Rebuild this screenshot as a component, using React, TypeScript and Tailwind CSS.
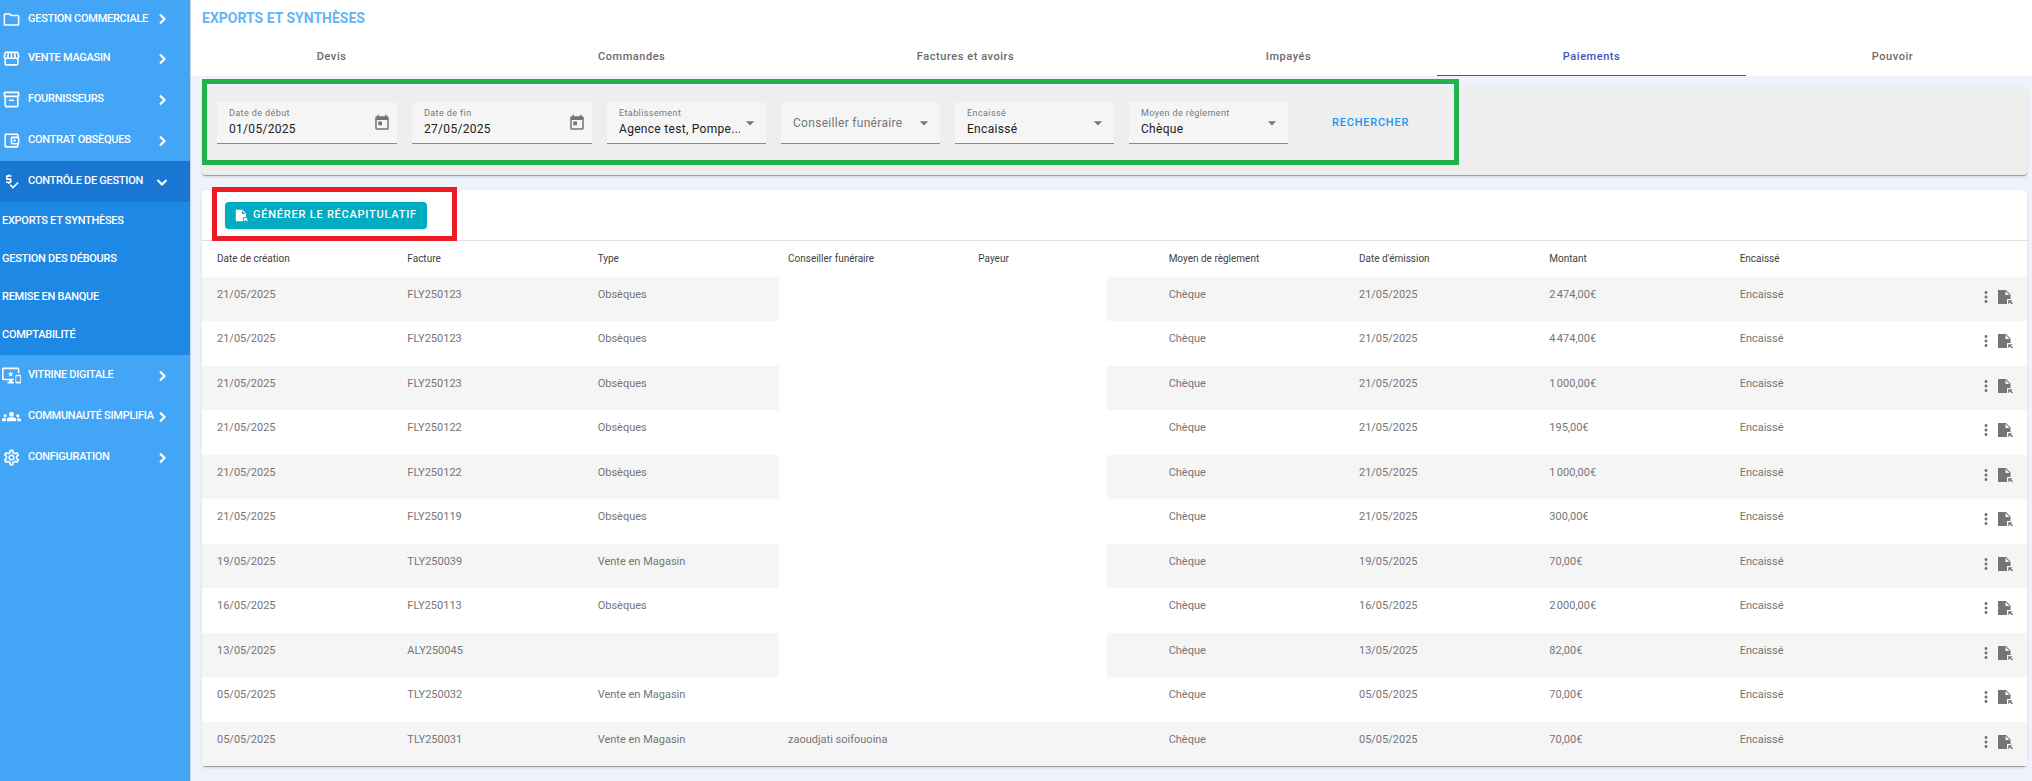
import { useState } from 'react'
import type { ReactNode } from 'react'
import type { IconType } from 'react-icons'
import {
  MdArrowDropDown, MdGroups, MdImportantDevices, MdMoreVert, MdOutlineAccountBalanceWallet,
  MdOutlineFolder, MdOutlineInventory2, MdOutlineSettings, MdOutlineStorefront, MdPriceCheck, MdToday,
} from 'react-icons/md'

interface MenuItem {
  label: string
  icon: IconType
  children?: string[]
}

interface Payment {
  created: string
  invoice: string
  type: string
  advisor?: string
  amount: string
}

const MENU: MenuItem[] = [
  { label: 'GESTION COMMERCIALE', icon: MdOutlineFolder },
  { label: 'VENTE MAGASIN', icon: MdOutlineStorefront },
  { label: 'FOURNISSEURS', icon: MdOutlineInventory2 },
  { label: 'CONTRAT OBSÈQUES', icon: MdOutlineAccountBalanceWallet },
  {
    label: 'CONTRÔLE DE GESTION',
    icon: MdPriceCheck,
    children: ['EXPORTS ET SYNTHÈSES', 'GESTION DES DÉBOURS', 'REMISE EN BANQUE', 'COMPTABILITÉ'],
  },
  { label: 'VITRINE DIGITALE', icon: MdImportantDevices },
  { label: 'COMMUNAUTÉ SIMPLIFIA', icon: MdGroups },
  { label: 'CONFIGURATION', icon: MdOutlineSettings },
]

const TABS = ['Devis', 'Commandes', 'Factures et avoirs', 'Impayés', 'Paiements', 'Pouvoir']

const COLUMNS = [
  'Date de création', 'Facture', 'Type', 'Conseiller funéraire', 'Payeur',
  'Moyen de règlement', "Date d'émission", 'Montant', 'Encaissé',
]

// \u202f: narrow space between thousands, as Intl writes it in French
const PAYMENTS: Payment[] = [
  { created: '21/05/2025', invoice: 'FLY250123', type: 'Obsèques', amount: '2\u202f474,00€' },
  { created: '21/05/2025', invoice: 'FLY250123', type: 'Obsèques', amount: '4\u202f474,00€' },
  { created: '21/05/2025', invoice: 'FLY250123', type: 'Obsèques', amount: '1\u202f000,00€' },
  { created: '21/05/2025', invoice: 'FLY250122', type: 'Obsèques', amount: '195,00€' },
  { created: '21/05/2025', invoice: 'FLY250122', type: 'Obsèques', amount: '1\u202f000,00€' },
  { created: '21/05/2025', invoice: 'FLY250119', type: 'Obsèques', amount: '300,00€' },
  { created: '19/05/2025', invoice: 'TLY250039', type: 'Vente en Magasin', amount: '70,00€' },
  { created: '16/05/2025', invoice: 'FLY250113', type: 'Obsèques', amount: '2\u202f000,00€' },
  { created: '13/05/2025', invoice: 'ALY250045', type: '', amount: '82,00€' },
  { created: '05/05/2025', invoice: 'TLY250032', type: 'Vente en Magasin', amount: '70,00€' },
  { created: '05/05/2025', invoice: 'TLY250031', type: 'Vente en Magasin', advisor: 'zaoudjati soifouoina', amount: '70,00€' },
]

function Chevron({ open }: { open: boolean }) {
  return (
    <svg viewBox="0 0 12 12" className="size-3 shrink-0" fill="none" stroke="currentColor" strokeWidth="2.2">
      <path d={open ? 'M1.5 4L6 8.5 10.5 4' : 'M4 1.5L8.5 6 4 10.5'} />
    </svg>
  )
}

function FileExportIcon({ className }: { className: string }) {
  return (
    <svg viewBox="0 0 16 16" className={className} fill="currentColor">
      <path fillRule="evenodd" d="M1 1h8l4.500 4.500V10H10v5H1zM8.500 2v4h4z" />
      <path d="M11.200 11.200H15.500L14.200 12.500l1.800 2L15 15.500l-1.900-1.900-1.900 1.700z" />
    </svg>
  )
}

function Sidebar() {
  const [opened, setOpened] = useState('CONTRÔLE DE GESTION')

  return (
    <nav className="w-[191px] shrink-0 border-r border-[#ccd3e2] bg-[#42a5f5] text-[11px] font-medium tracking-tight text-white">
      {MENU.map(({ label, icon: Icon, children }, i) => {
        const open = opened === label
        return (
          <div key={label}>
            <button
              onClick={() => setOpened(open ? '' : label)}
              className={`flex w-full items-center pr-[22px] pl-[2px] whitespace-nowrap ${i === 0 ? 'h-[38px]' : 'h-[41px]'} ${open ? 'bg-[#1976d2]' : ''}`}
            >
              <Icon className="mr-[7px] size-[19px] shrink-0" />
              <span className="flex-1 text-left">{label}</span>
              <Chevron open={open} />
            </button>
            {open && children && (
              <div className="bg-[#1e88e5] pb-px">
                {children.map(child => (
                  <a key={child} href="#" className="flex h-[38px] items-center pl-[2px]">{child}</a>
                ))}
              </div>
            )}
          </div>
        )
      })}
    </nav>
  )
}

function Field({ id, label, icon, className, children }: {
  id: string
  label: string
  icon: ReactNode
  className: string
  children: ReactNode
}) {
  return (
    <div className={`flex h-[42px] items-center rounded-t border-b border-[#8c8c8c] bg-[#f5f5f5] pl-3 tracking-wide text-[#757575] ${className}`}>
      <div className="min-w-0 flex-1">
        <label htmlFor={id} className="block text-[9px] leading-3">{label}</label>
        {children}
      </div>
      {icon}
    </div>
  )
}

function DateField({ id, label, value }: { id: string; label: string; value: string }) {
  return (
    <Field id={id} label={label} className="w-[180px] pr-[6px]" icon={<MdToday className="size-[18px]" />}>
      <input id={id} defaultValue={value} className="block h-5 w-full text-xs tracking-wide text-[#212121] outline-none" />
    </Field>
  )
}

function SelectField({ id, label, value }: { id: string; label: string; value: string }) {
  return (
    <Field id={id} label={label} className="w-[159px] pr-[6px]" icon={<MdArrowDropDown className="size-5" />}>
      <select id={id} className="block h-5 w-full appearance-none text-xs tracking-wide text-[#212121] outline-none">
        <option>{value}</option>
      </select>
    </Field>
  )
}

function Filters() {
  return (
    <section className="relative rounded-sm border-b border-[#9e9e9e] bg-[#eeeeee] pt-[15px] pb-[31px] pl-[15px] shadow-sm">
      <form className="flex gap-[15px]" onSubmit={e => e.preventDefault()}>
        <DateField id="start" label="Date de début" value="01/05/2025" />
        <DateField id="end" label="Date de fin" value="27/05/2025" />
        <SelectField id="agency" label="Etablissement" value="Agence test, Pompe..." />
        <div className="relative flex h-[42px] w-[159px] items-center justify-end rounded-t border-b border-[#8c8c8c] bg-[#f5f5f5] pr-[6px] text-[#757575]">
          <label htmlFor="advisor" className="absolute left-3 text-xs tracking-wide">Conseiller funéraire</label>
          <select id="advisor" className="h-full flex-1 appearance-none outline-none">
            <option value="" />
          </select>
          <MdArrowDropDown className="size-5" />
        </div>
        <SelectField id="cashed" label="Encaissé" value="Encaissé" />
        <SelectField id="method" label="Moyen de règlement" value="Chèque" />
        <button className="ml-[15px] px-[14px] text-[11px] font-medium tracking-[0.07em] text-[#2196f3]">
          RECHERCHER
        </button>
      </form>
      <div className="pointer-events-none absolute -top-2 left-0 h-[86px] w-[1257px] border-5 border-[#22b14c]" />
    </section>
  )
}

function PaymentsTable() {
  return (
    <section className="relative rounded-sm border-b border-[#9e9e9e] bg-white shadow-sm">
      <div className="flex h-[51px] items-center border-b border-[#e0e0e0] pl-[23px]">
        <button className="flex h-[27px] items-center gap-[5px] rounded bg-[#00acc1] px-[10px] text-[11px] font-medium tracking-[0.07em] text-white shadow">
          <FileExportIcon className="size-[13px]" />
          GÉNÉRER LE RÉCAPITULATIF
        </button>
      </div>
      <div className="relative">
        <table className="w-full table-fixed text-left text-[11px] text-[#757575]">
          <thead>
            <tr className="h-9 text-[10px] text-[#424242]">
              {COLUMNS.map(name => (
                <th key={name} className="pb-px pl-[15px] font-normal">{name}</th>
              ))}
              <th className="w-28" />
            </tr>
          </thead>
          <tbody>
            {PAYMENTS.map((p, i) => (
              <tr key={i} className="align-top odd:h-11 odd:bg-[#f5f5f5] even:h-[45px]">
                {[p.created, p.invoice, p.type, p.advisor, '', 'Chèque', p.created, p.amount, 'Encaissé'].map((text, j) => (
                  <td key={j} className="pt-[10px] pl-[15px] leading-4">{text}</td>
                ))}
                <td className="pt-[11px]">
                  <div className="flex items-center justify-end gap-[2px] pr-[14px]">
                    <button aria-label="Actions"><MdMoreVert className="size-[18px]" /></button>
                    <button aria-label="Exporter"><FileExportIcon className="size-4" /></button>
                  </div>
                </td>
              </tr>
            ))}
          </tbody>
        </table>
        {/* hidden client names */}
        <div className="absolute top-9 bottom-11 left-[31.6%] w-[18%] bg-white" />
      </div>
      <div className="pointer-events-none absolute -top-[3px] left-[10px] h-[54px] w-[245px] border-5 border-[#ed1c24]" />
    </section>
  )
}

export default function App() {
  const [tab, setTab] = useState('Paiements')

  return (
    <div className="flex min-h-screen overflow-hidden bg-[#edf2fb] font-[Roboto,sans-serif]">
      <Sidebar />
      <div className="min-w-0 flex-1">
        <header className="bg-white">
          <h1 className="pt-2 pl-[11px] text-sm leading-5 font-bold text-[#64b5f6]">EXPORTS ET SYNTHÈSES</h1>
          <div role="tablist" className="-mr-[7px] flex h-12">
            {TABS.map(name => (
              <button
                key={name}
                role="tab"
                aria-selected={name === tab}
                onClick={() => setTab(name)}
                className={`flex-auto border-b pt-[11px] text-[11px] font-medium tracking-wider ${name === tab ? 'border-[#3f51b5] text-[#3f51b5]' : 'border-transparent text-[#6b6b6b]'}`}
              >
                {name}
              </button>
            ))}
          </div>
        </header>
        <main className="flex flex-col gap-[14px] pt-[11px] pr-[5px] pb-[14px] pl-[11px]">
          <Filters />
          <PaymentsTable />
        </main>
      </div>
    </div>
  )
}
